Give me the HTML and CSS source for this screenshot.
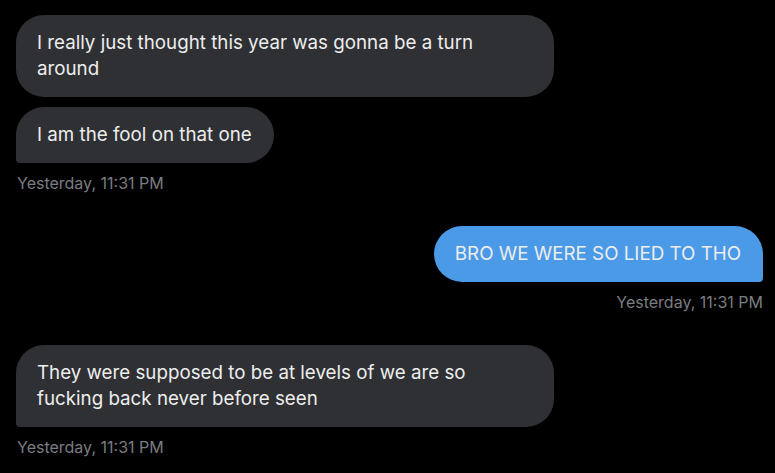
FILE: index.html
```html
<!DOCTYPE html>
<html>
<head>
<meta charset="utf-8">
<link rel="stylesheet" href="styles.css">
</head>
<body>
<div class="chat">
  <div class="group in">
    <div class="bubble">I really just thought this year was gonna be a turn around</div>
    <div class="bubble last">I am the fool on that one</div>
    <div class="time">Yesterday, 11:31 PM</div>
  </div>
  <div class="group out">
    <div class="bubble last">BRO WE WERE SO LIED TO THO</div>
    <div class="time">Yesterday, 11:31 PM</div>
  </div>
  <div class="group in">
    <div class="bubble last">They were supposed to be at levels of we are so fucking back never before seen</div>
    <div class="time">Yesterday, 11:31 PM</div>
  </div>
</div>
</body>
</html>
```
FILE: styles.css
```css
html, body {
  margin: 0;
  padding: 0;
  background: #000;
}
body {
  width: 775px;
  height: 473px;
  overflow: hidden;
}
.chat {
  display: flex;
  flex-direction: column;
  gap: 33px;
  padding: 15px 12px 0 16px;
}
.group {
  display: flex;
  flex-direction: column;
  gap: 10px;
}
.group.in { align-items: flex-start; }
.group.out { align-items: flex-end; }
.bubble {
  box-sizing: border-box;
  max-width: 538px;
  padding: 15px 22px 15px 21px;
  border-radius: 28px;
  background: #2f3033;
  color: #eceded;
  font-family: Inter, sans-serif;
  font-size: 18.75px;
  line-height: 26px;
}
.in .bubble.last { border-bottom-left-radius: 4px; }
.out .bubble {
  background: #4b9ae8;
}
.out .bubble.last { border-bottom-right-radius: 4px; }
.time {
  color: #7a7d81;
  font-family: Inter, sans-serif;
  font-size: 16px;
  line-height: 20px;
  padding-left: 1px;
}
```
